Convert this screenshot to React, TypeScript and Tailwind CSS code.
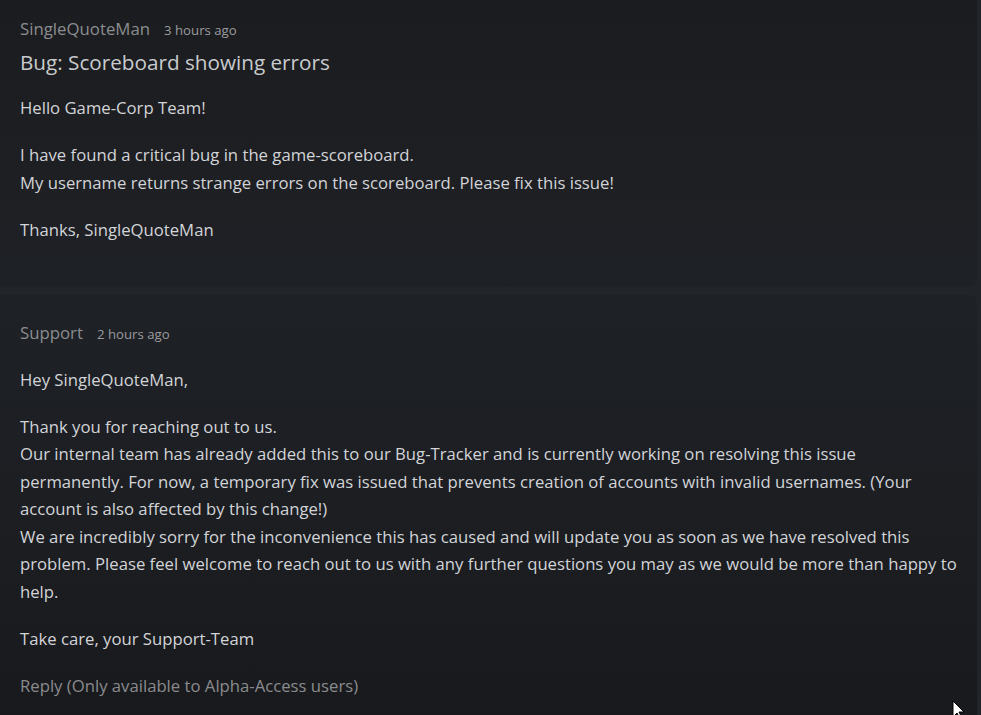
import React from "react";

const font = { fontFamily: "'Open Sans', 'Noto Sans', sans-serif" };

function Header({ name, time }: { name: string; time: string }) {
  return (
    <div className="flex items-baseline leading-[28px]">
      <span className="text-[16.8px] text-[#8b8d90]">{name}</span>
      <span className="ml-[14px] text-[13.2px] text-[#9a9b9d]">{time}</span>
    </div>
  );
}

export default function App() {
  return (
    <div
      className="relative h-[715px] w-[981px] overflow-hidden bg-[#212429] text-[16.7px] text-[#d2d4d8]"
      style={font}
    >
      <div className="-ml-2 -mt-[9px] mr-1 flex flex-col gap-2">
        <div className="rounded-lg bg-[linear-gradient(180deg,#1b1c1f_0%,#1e1f23_60%,#1e2126_100%)] pb-6 pl-7 pr-5 pt-6">
          <Header name="SingleQuoteMan" time="3 hours ago" />
          <h1 className="mt-1 mb-[18px] text-[20.7px] leading-[28px] text-[#c9cbce]">
            Bug: Scoreboard showing errors
          </h1>
          <div className="leading-[27.5px]">
            <p className="mb-[19.5px]">Hello Game-Corp Team!</p>
            <p className="mb-[19.5px]">
              I have found a critical bug in the game-scoreboard.
              <br />
              My username returns strange errors on the scoreboard. Please fix this issue!
            </p>
            <p className="mb-[19.5px]">Thanks, SingleQuoteMan</p>
          </div>
        </div>
        <div className="h-[440px] rounded-lg bg-[linear-gradient(180deg,#1e2126_0%,#1c1e22_50%,#18191c_100%)] pl-7 pr-5 pt-6">
          <Header name="Support" time="2 hours ago" />
          <div className="mt-[18px] leading-[27.5px]">
            <p className="mb-[19.5px]">Hey SingleQuoteMan,</p>
            <p className="mb-[19.5px]">
              Thank you for reaching out to us.
              <br />
              Our internal team has already added this to our Bug-Tracker and is currently working on resolving this issue permanently. For now, a temporary fix was issued that prevents creation of accounts with invalid usernames. (Your account is also affected by this change!)
              <br />
              We are incredibly sorry for the inconvenience this has caused and will update you as soon as we have resolved this problem. Please feel welcome to reach out to us with any further questions you may as we would be more than happy to help.
            </p>
            <p className="mb-[19.5px]">Take care, your Support-Team</p>
            <p className="text-[#8a8b8d]">Reply (Only available to Alpha-Access users)</p>
          </div>
        </div>
      </div>
      <svg
        className="absolute left-[952px] top-[700px]"
        width="14"
        height="20"
        viewBox="0 0 14 20"
      >
        <path d="M1 1 L1 17 L5 13 L8 19 L10 18 L7 12 L12 12 Z" fill="#fff" stroke="#000" strokeWidth="1" />
      </svg>
    </div>
  );
}
